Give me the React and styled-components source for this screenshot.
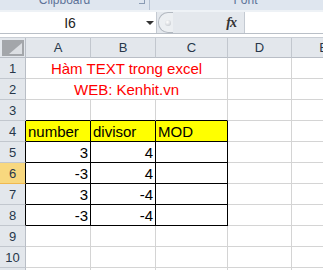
import React from 'react';
import styled, { createGlobalStyle } from 'styled-components';

const GlobalStyle = createGlobalStyle`
  html, body {
    margin: 0;
    padding: 0;
    background: #ffffff;
    overflow: hidden;
  }
`;

const Window = styled.div`
  width: 323px;
  height: 270px;
  overflow: hidden;
  font-family: "Liberation Sans", Arial, sans-serif;
  background: #ffffff;
`;

const Ribbon = styled.div`
  display: flex;
  height: 10px;
  background: #dfe6ef;
  overflow: hidden;
`;

const RibbonGroup = styled.div`
  position: relative;
  width: ${(p) => p.$width || 'auto'};
  flex: ${(p) => (p.$width ? 'none' : '1')};
  box-sizing: border-box;
  padding: ${(p) => p.$pad || '0'};
  border-right: ${(p) => (p.$width ? '1px solid #b6c2d2' : 'none')};
  text-align: center;
  font-size: 12px;
  line-height: 12px;
  color: #5d7398;
`;

const GroupLabel = styled.div`
  margin-top: -6px;
`;

const Launcher = styled.span`
  position: absolute;
  right: 4px;
  top: -2px;
  width: 5px;
  height: 5px;
  border: 1px solid #8a9bb3;
  border-top: none;
  border-left: none;
`;

const Band = styled.div`
  height: 2px;
  background: #eef2f6;
`;

const FormulaBar = styled.div`
  display: flex;
  height: 21px;
  background: #e4e8ed;
  border-bottom: 1px solid #b9bfc7;
`;

const NameBox = styled.div`
  position: relative;
  width: 157px;
  background: #ffffff;
  border-right: 1px solid #c4cad2;
  display: flex;
  align-items: center;
  justify-content: center;
  font-size: 14px;
  color: #222;
  padding-right: 16px;
  box-sizing: border-box;
`;

const DropArrow = styled.span`
  position: absolute;
  right: 2px;
  top: 9px;
  width: 0;
  height: 0;
  border-left: 4px solid transparent;
  border-right: 4px solid transparent;
  border-top: 4px solid #333;
`;

const Grip = styled.div`
  width: 88px;
  display: flex;
  align-items: center;
  justify-content: space-between;
  padding: 0 8px 0 1px;
  box-sizing: border-box;
  border-right: 1px solid #c4cad2;
`;

const GripKnob = styled.div`
  width: 14px;
  height: 19px;
  border: 1px solid #b3b9c1;
  border-right: none;
  border-radius: 10px 0 0 10px;
  background: #eceff2;
  display: flex;
  align-items: center;
  justify-content: center;
`;

const GripDot = styled.div`
  width: 6px;
  height: 6px;
  border-radius: 50%;
  background: radial-gradient(circle at 40% 35%, #ffffff, #b9bec5);
  margin-left: 3px;
`;

const Fx = styled.span`
  font-family: "Liberation Serif", "Times New Roman", serif;
  font-style: italic;
  font-weight: bold;
  font-size: 14px;
  color: #333;
  letter-spacing: -1px;
`;

const FormulaInput = styled.div`
  flex: 1;
  background: #ffffff;
`;

const Gap = styled.div`
  height: 3px;
  background: #ffffff;
`;

const Sheet = styled.div`
  display: grid;
  grid-template-columns: 26px 65px 65px 72px 64px 64px;
  grid-template-rows: 20px;
  grid-auto-rows: 21px;
  border-top: 1px solid #c9ced5;
`;

const Corner = styled.div`
  background: #e3e7ec;
  border-right: 1px solid #b9bec6;
  border-bottom: 1px solid #b9bec6;
  display: flex;
  align-items: center;
  justify-content: center;
`;

const ColHead = styled.div`
  background: #e3e7ec;
  border-right: 1px solid #c2c7ce;
  border-bottom: 1px solid #b9bec6;
  display: flex;
  align-items: center;
  justify-content: center;
  font-size: 13px;
  color: #27374a;
`;

const RowHead = styled.div`
  background: ${(p) => (p.$active ? '#f8d87f' : '#e3e7ec')};
  border-right: 1px solid ${(p) => (p.$edge ? '#000' : '#b9bec6')};
  border-bottom: 1px solid ${(p) => (p.$active ? '#f0b950' : '#c2c7ce')};
  display: flex;
  align-items: center;
  justify-content: center;
  font-size: 13px;
  color: #27374a;
`;

const Cell = styled.div`
  grid-column: span ${(p) => p.$span || 1};
  background: ${(p) => p.$bg || '#ffffff'};
  border-right: 1px solid ${(p) => (p.$br ? '#000' : '#d4d4d4')};
  border-bottom: 1px solid ${(p) => (p.$bb ? '#000' : '#d4d4d4')};
  display: flex;
  align-items: flex-end;
  justify-content: ${(p) => p.$align || 'flex-start'};
  padding: 0 2px 0 2px;
  font-size: 15px;
  line-height: 18px;
  color: ${(p) => p.$color || '#000'};
  white-space: nowrap;
  overflow: hidden;
`;

const CornerMark = () => (
  <svg width="22" height="16" viewBox="0 0 22 16">
    <rect x="0" y="0" width="22" height="16" fill="#a3a6aa" />
    <polygon points="20,3 20,14 7,14" fill="#dcdfe3" />
  </svg>
);

const table = [
  [1, 'Hàm TEXT trong excel'],
  [2, 'WEB: Kenhit.vn'],
  [3],
  [4, ['number', 'divisor', 'MOD']],
  [5, ['3', '4', '']],
  [6, ['-3', '4', '']],
  [7, ['3', '-4', '']],
  [8, ['-3', '-4', '']],
  [9],
  [10],
  [11],
];

const App = () => (
  <Window>
    <GlobalStyle />
    <Ribbon>
      <RibbonGroup $width="150px" $pad="0 20px 0 0">
        <GroupLabel>Clipboard</GroupLabel>
        <Launcher />
      </RibbonGroup>
      <RibbonGroup $pad="0 0 0 18px">
        <GroupLabel>Font</GroupLabel>
      </RibbonGroup>
    </Ribbon>
    <Band />
    <FormulaBar>
      <NameBox>
        I6
        <DropArrow />
      </NameBox>
      <Grip>
        <GripKnob>
          <GripDot />
        </GripKnob>
        <Fx>fx</Fx>
      </Grip>
      <FormulaInput />
    </FormulaBar>
    <Gap />
    <Sheet>
      <Corner>
        <CornerMark />
      </Corner>
      {['A', 'B', 'C', 'D', 'E'].map((c) => (
        <ColHead key={c}>{c}</ColHead>
      ))}
      {table.map(([n, content]) => {
        const boxed = n >= 4 && n <= 8;
        return (
          <React.Fragment key={n}>
            <RowHead $active={n === 6} $edge={boxed}>{n}</RowHead>
            {typeof content === 'string' ? (
              <Cell $span={3} $align="center" $color="#ff0000">
                {content}
              </Cell>
            ) : Array.isArray(content) ? (
              content.map((v, i) => (
                <Cell
                  key={i}
                  $br
                  $bb
                  $bg={n === 4 ? '#ffff00' : undefined}
                  $align={n === 4 ? 'flex-start' : 'flex-end'}
                >
                  {v}
                </Cell>
              ))
            ) : (
              [0, 1, 2].map((i) => <Cell key={i} $bb={n === 3} />)
            )}
            <Cell />
            <Cell />
          </React.Fragment>
        );
      })}
    </Sheet>
  </Window>
);

export default App;
